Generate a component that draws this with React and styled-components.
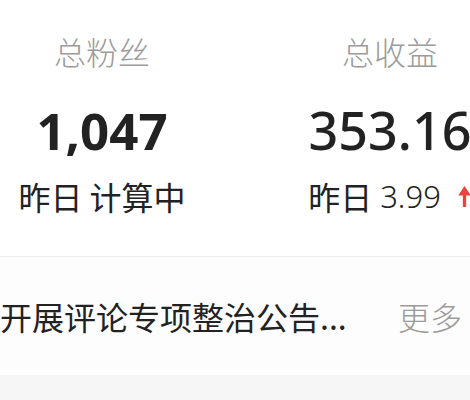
import React from 'react'
import styled, { createGlobalStyle } from 'styled-components'

const GlobalStyle = createGlobalStyle`
  html, body {
    margin: 0;
    padding: 0;
    background: #fff;
    overflow: hidden;
  }
  body {
    font-family: "Noto Sans", "Noto Sans CJK SC", sans-serif;
  }
`

const Page = styled.div`
  width: 470px;
  height: 400px;
  overflow: hidden;
  display: flex;
  flex-direction: column;
  background: #fff;
`

const Stats = styled.div`
  display: grid;
  grid-template-columns: 204px 204px;
  column-gap: 84px;
  padding: 31px 0 40px;
  border-bottom: 1px solid #eeeeee;
`

const Stat = styled.div`
  display: flex;
  flex-direction: column;
  align-items: center;
  white-space: nowrap;
`

const Label = styled.div`
  font-family: "Noto Sans CJK SC", sans-serif;
  font-size: 32px;
  font-weight: 300;
  line-height: 40px;
  color: #9b9b9b;
`

const Value = styled.div`
  margin-top: 29px;
  font-family: "Noto Sans", "Open Sans", sans-serif;
  font-size: ${p => (p.$bold ? 51 : 52)}px;
  font-weight: ${p => (p.$bold ? 700 : 500)};
  line-height: 60px;
  color: #222;
`

const Sub = styled.div`
  margin-top: 16px;
  display: flex;
  align-items: center;
  font-family: "Noto Sans CJK SC", sans-serif;
  font-size: 32px;
  line-height: 40px;
  color: #222;
`

const SubNum = styled.span`
  margin-left: 8px;
  margin-right: 16px;
  font-family: "Noto Sans", sans-serif;
  font-weight: 300;
  font-size: 31px;
`

const Notice = styled.div`
  height: 118px;
  display: flex;
  align-items: center;
  justify-content: space-between;
  padding: 0 8px 0 0;
  background: #fdfdfd;
`

const NoticeText = styled.div`
  font-family: "Noto Sans CJK SC", sans-serif;
  font-size: 32px;
  color: #222;
  white-space: nowrap;
`

const More = styled.div`
  font-family: "Noto Sans CJK SC", sans-serif;
  font-size: 32px;
  font-weight: 300;
  color: #9b9b9b;
`

const Footer = styled.div`
  flex: 1;
  background: #f6f6f6;
`

const UpArrow = () => (
  <svg width="15" height="23" viewBox="0 0 14 22">
    <path d="M7 1 L13 10 L8.6 10 L8.6 21 L5.4 21 L5.4 10 L1 10 Z" fill="#e5463e" />
  </svg>
)

export default function App() {
  return (
    <Page>
      <GlobalStyle />
      <Stats>
        <Stat>
          <Label>总粉丝</Label>
          <Value $bold>1,047</Value>
          <Sub>昨日 计算中</Sub>
        </Stat>
        <Stat>
          <Label>总收益</Label>
          <Value>353.16</Value>
          <Sub>
            <span>昨日</span>
            <SubNum>3.99</SubNum>
            <UpArrow />
          </Sub>
        </Stat>
      </Stats>
      <Notice>
        <NoticeText>开展评论专项整治公告...</NoticeText>
        <More>更多</More>
      </Notice>
      <Footer />
    </Page>
  )
}
